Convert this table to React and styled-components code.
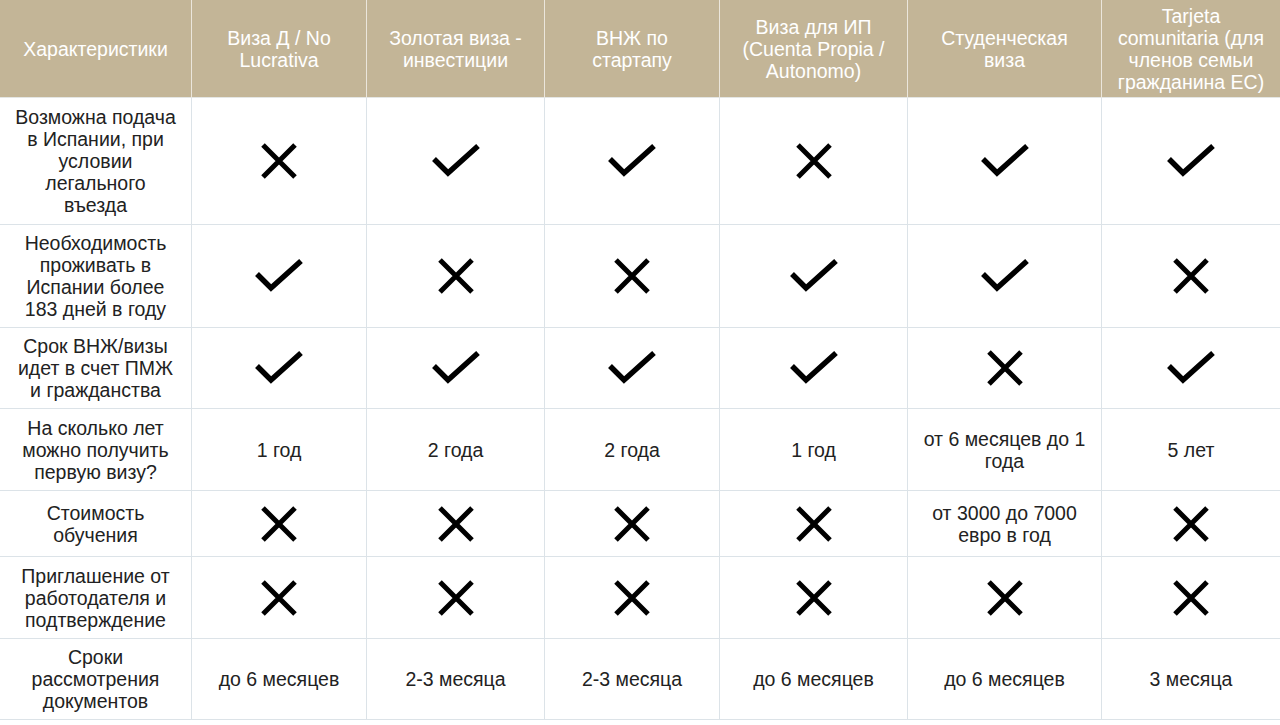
import React from "react";
import styled, { createGlobalStyle } from "styled-components";

const Global = createGlobalStyle`
  html, body { margin: 0; padding: 0; background: #fff; }
  body { font-family: "Liberation Sans", Arial, sans-serif; }
`;

const Table = styled.div`
  display: grid;
  width: 1280px;
  grid-template-columns: 192px 175px 178px 175px 188px 194px 178px;
  grid-template-rows: 98px 127px 103px 81px 82px 66px 82px 81px;
`;

const HeadCell = styled.div`
  box-sizing: border-box;
  background: #c3b597;
  color: #fff;
  display: flex;
  align-items: center;
  justify-content: center;
  text-align: center;
  padding: 0 4px;
  font-size: 19.5px;
  line-height: 22px;
  border-right: ${(p) => (p.$last ? "none" : "1.5px solid #ebe6dc")};
  border-bottom: 1.5px solid #e4e6e4;
`;

const Cell = styled.div`
  box-sizing: border-box;
  background: #fff;
  color: #222;
  display: flex;
  align-items: center;
  justify-content: center;
  text-align: center;
  padding: 0 4px;
  font-size: 19.5px;
  line-height: 22px;
  border-right: ${(p) => (p.$last ? "none" : "1.5px solid #dce3e8")};
  border-bottom: 1.5px solid #dce3e8;
`;

const Icon = styled.svg`
  display: block;
`;

const Cross = () => (
  <Icon width="38" height="38" viewBox="0 0 38 38">
    <path d="M3 3 L35 35 M35 3 L3 35" stroke="#000" strokeWidth="5" fill="none" />
  </Icon>
);

const Check = () => (
  <Icon width="50" height="36" viewBox="0 0 50 36">
    <polyline points="3,16 17,30 47,3" stroke="#000" strokeWidth="5.5" fill="none" />
  </Icon>
);

const headers = [
  ["Характеристики"],
  ["Виза Д / No", "Lucrativa"],
  ["Золотая виза -", "инвестиции"],
  ["ВНЖ по", "стартапу"],
  ["Виза для ИП", "(Cuenta Propia /", "Autonomo)"],
  ["Студенческая", "виза"],
  ["Tarjeta", "comunitaria (для", "членов семьи", "гражданина ЕС)"],
];

const rows = [
  {
    label: ["Возможна подача", "в Испании, при", "условии", "легального", "въезда"],
    cells: ["x", "v", "v", "x", "v", "v"],
  },
  {
    label: ["Необходимость", "проживать в", "Испании более", "183 дней в году"],
    cells: ["v", "x", "x", "v", "v", "x"],
  },
  {
    label: ["Срок ВНЖ/визы", "идет в счет ПМЖ", "и гражданства"],
    cells: ["v", "v", "v", "v", "x", "v"],
  },
  {
    label: ["На сколько лет", "можно получить", "первую визу?"],
    cells: [["1 год"], ["2 года"], ["2 года"], ["1 год"], ["от 6 месяцев до 1", "года"], ["5 лет"]],
  },
  {
    label: ["Стоимость", "обучения"],
    cells: ["x", "x", "x", "x", ["от 3000 до 7000", "евро в год"], "x"],
  },
  {
    label: ["Приглашение от", "работодателя и", "подтверждение"],
    cells: ["x", "x", "x", "x", "x", "x"],
  },
  {
    label: ["Сроки", "рассмотрения", "документов"],
    cells: [["до 6 месяцев"], ["2-3 месяца"], ["2-3 месяца"], ["до 6 месяцев"], ["до 6 месяцев"], ["3 месяца"]],
  },
];

const Lines = ({ lines }) => (
  <div>
    {lines.map((l, i) => (
      <React.Fragment key={i}>
        {i > 0 && <br />}
        {l}
      </React.Fragment>
    ))}
  </div>
);

const renderContent = (c) => {
  if (c === "x") return <Cross />;
  if (c === "v") return <Check />;
  return <Lines lines={c} />;
};

export default function App() {
  return (
    <>
      <Global />
      <Table>
        {headers.map((h, i) => (
          <HeadCell key={i} $last={i === headers.length - 1}>
            <Lines lines={h} />
          </HeadCell>
        ))}
        {rows.map((r, ri) => (
          <React.Fragment key={ri}>
            <Cell>
              <Lines lines={r.label} />
            </Cell>
            {r.cells.map((c, ci) => (
              <Cell key={ci} $last={ci === r.cells.length - 1}>
                {renderContent(c)}
              </Cell>
            ))}
          </React.Fragment>
        ))}
      </Table>
    </>
  );
}
